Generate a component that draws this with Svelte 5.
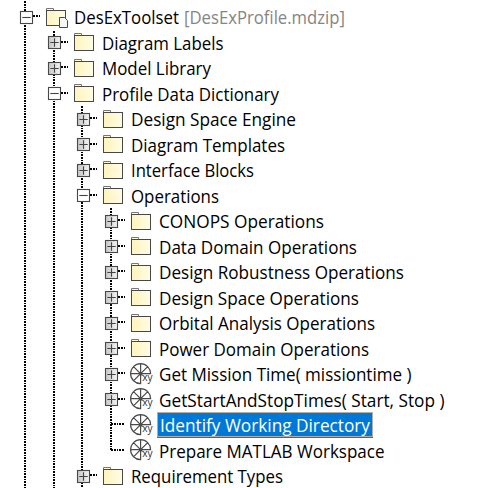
<script>
  // Each row: depth, kind, open state, label, label width
  const rows = [
    [0, 'project', '-', 'DesExToolset', 105],
    [1, 'folder', '+', 'Diagram Labels', 121.5],
    [1, 'folder', '+', 'Model Library', 109],
    [1, 'folder', '-', 'Profile Data Dictionary', 177],
    [2, 'folder', '+', 'Design Space Engine', 165],
    [2, 'folder', '+', 'Diagram Templates', 154],
    [2, 'folder', '+', 'Interface Blocks', 123],
    [2, 'folder', '-', 'Operations', 88],
    [3, 'folder', '+', 'CONOPS Operations', 165],
    [3, 'folder', '+', 'Data Domain Operations', 198],
    [3, 'folder', '+', 'Design Robustness Operations', 245],
    [3, 'folder', '+', 'Design Space Operations', 200],
    [3, 'folder', '+', 'Orbital Analysis Operations', 216],
    [3, 'folder', '+', 'Power Domain Operations', 210],
    [3, 'op', '+', 'Get Mission Time( missiontime )', 252.5],
    [3, 'op', '+', 'GetStartAndStopTimes( Start, Stop )', 285.5],
    [3, 'op', '', 'Identify Working Directory', 210, true],
    [3, 'op', '', 'Prepare MATLAB Workspace', 225.5],
    [2, 'folder', '+', 'Requirement Types', 152]
  ].map(([depth, kind, toggle, label, width, selected]) => ({ depth, kind, toggle, label, width, selected }));

  const indent = [20, 48, 77, 105];
  // Vertical guides: x, top, bottom
  const guides = [[25, 1, 488], [54, 31, 488], [82, 106, 488], [111, 208, 450]];
</script>

<main>
  <svg class="guides" width="490" height="488">
    {#each guides as [x, y1, y2]}
      <line x1={x} x2={x} {y1} {y2} />
    {/each}
  </svg>
  {#each rows as r, i}
    <div class="row" class:tall={i % 2 === 1} style="padding-left:{indent[r.depth]}px">
      <svg class="toggle" width="22" height="25" viewBox="0 0 22 25">
        <path class="dots" d="M{r.toggle ? 13 : 6} {11 + (i % 2)}H20" />
        {#if r.toggle}
          <rect x=".5" y="6.5" width="12" height="12" fill={r.toggle === '+' ? 'url(#box)' : '#fff'} stroke="#484848" stroke-width="1.1" />
          <path d={r.toggle === '+' ? 'M2.3 12.5H10.7M6.5 8.3V16.7' : 'M2.3 12.5H10.7'} stroke="#444" stroke-width="1.1" />
        {/if}
      </svg>
      <svg class="icon" width="24" height="25" viewBox="0 0 24 25">
        {#if r.kind === 'op'}
          <path class="wheel" d="M19.6 11.7A10 10 0 1 0 9.6 21.7M9.6 1.7V22.3M-.4 11.7H20.2M2.5 4.6L9.6 11.7L16.7 4.6M2.5 18.8L9.6 11.7L11.6 13.7" />
          <text x="11.2" y="19" class="xy" textLength="10.4" lengthAdjust="spacingAndGlyphs">xy</text>
        {:else}
          <path d="M.5 5.5V3.5H7.5V5.5" fill="#fffbd5" stroke="#777" />
          <rect x=".5" y="5.5" width="19" height="15" fill="url(#paper)" stroke="#484848" />
          {#if r.kind === 'project'}
            <path d="M13.5 12.5H18.5L21.5 15.5V22.5H13.5Z" fill="#f6f6f6" stroke="#484848" />
          {/if}
        {/if}
      </svg>
      <div class="label" class:selected={r.selected}>
        <svg width={r.width} height="25">
          <text x="0" y={19 + (i % 2)} textLength={r.width} lengthAdjust="spacingAndGlyphs">{r.label}</text>
        </svg>
      </div>
      {#if r.kind === 'project'}
        <svg class="file" width="161" height="25">
          <text x="0" y="19" textLength="161" lengthAdjust="spacingAndGlyphs">[DesExProfile.mdzip]</text>
        </svg>
      {/if}
    </div>
  {/each}
  <svg class="defs" width="0" height="0">
    <defs>
      <linearGradient id="box"><stop stop-color="#c6c6c6" /><stop offset="1" stop-color="#f4f4f4" /></linearGradient>
      <linearGradient id="paper"><stop stop-color="#fff4bd" /><stop offset="1" stop-color="#fffce5" /></linearGradient>
    </defs>
  </svg>
</main>

<style>
  :global(body) { background: #fff; }
  main {
    position: relative;
    width: 490px;
    height: 488px;
    box-sizing: border-box;
    padding-top: 5px;
    overflow: hidden;
    font: 18.2px 'Open Sans', 'Noto Sans', sans-serif;
  }
  svg { display: block; overflow: visible; flex: none; }
  .guides, .defs { position: absolute; left: 0; top: 0; }
  .guides line, .dots { stroke: #000; stroke-width: 2; stroke-dasharray: 2 1 2 1 1 1; fill: none; }
  .row { position: relative; display: flex; height: 25px; }
  .row.tall { height: 26px; }
  .toggle { margin-right: 4px; }
  .icon { margin-right: 2px; }
  .label { padding: 0 2px; }
  .selected {
    height: 23px;
    margin-top: -1px;
    background: #0078d7;
    border: 1px solid #b4ada0;
    box-shadow: 0 1px 0 #0078d7;
  }
  .selected text { fill: #fff; }
  .file { margin-left: 3px; }
  .file text { fill: #858585; }
  .wheel { fill: none; stroke: #4a4a4a; stroke-width: 1.2; }
  .xy { font-size: 10.5px; fill: #333; }
</style>
